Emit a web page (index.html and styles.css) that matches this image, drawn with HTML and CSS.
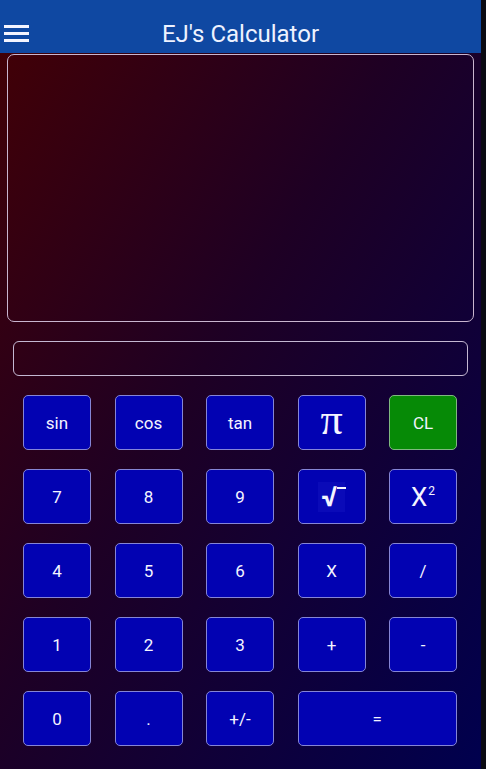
FILE: index.html
```html
<!DOCTYPE html>
<html>
<head>
<meta charset="utf-8">
<link rel="stylesheet" href="styles.css">
</head>
<body>
<div class="app">
  <header class="topbar">
    <div class="menu"><span></span><span></span><span></span></div>
    <h1 class="title">EJ's Calculator</h1>
  </header>
  <div class="display"></div>
  <div class="entry"></div>
  <div class="keypad">
    <button class="key">sin</button>
    <button class="key">cos</button>
    <button class="key">tan</button>
    <button class="key key-pi">π</button>
    <button class="key key-clear">CL</button>

    <button class="key">7</button>
    <button class="key">8</button>
    <button class="key">9</button>
    <button class="key key-sqrt"><span class="root">√<span class="bar"></span></span></button>
    <button class="key key-sq">X<sup>2</sup></button>

    <button class="key">4</button>
    <button class="key">5</button>
    <button class="key">6</button>
    <button class="key">X</button>
    <button class="key">/</button>

    <button class="key">1</button>
    <button class="key">2</button>
    <button class="key">3</button>
    <button class="key">+</button>
    <button class="key">-</button>

    <button class="key">0</button>
    <button class="key">.</button>
    <button class="key">+/-</button>
    <button class="key key-eq">=</button>
  </div>
</div>
</body>
</html>
```
FILE: styles.css
```css
html, body {
  margin: 0;
  padding: 0;
  background: #0a0a12;
}
body {
  width: 486px;
  height: 769px;
  overflow: hidden;
  font-family: Roboto, "Liberation Sans", sans-serif;
}
.app {
  width: 481px;
  height: 769px;
  background: linear-gradient(to bottom right, #440004 0%, #1e0024 45%, #00004e 100%);
  display: flex;
  flex-direction: column;
}
.topbar {
  height: 53px;
  background: #0f48a2;
  display: flex;
  align-items: flex-end;
  position: relative;
  flex-shrink: 0;
}
.menu {
  display: flex;
  flex-direction: column;
  gap: 4px;
  margin: 0 0 11px 4px;
}
.menu span {
  display: block;
  width: 25px;
  height: 3px;
  background: #f4f4ff;
}
.title {
  position: absolute;
  left: 0;
  right: 0;
  bottom: 5px;
  margin: 0;
  text-align: center;
  font-weight: 400;
  font-size: 24px;
  line-height: 28px;
  color: #eef2ff;
}
.display {
  margin: 1px 7px 0 7px;
  height: 266px;
  border: 1px solid #c9b5cf;
  border-radius: 7px;
}
.entry {
  margin: 19px 13px 0 13px;
  height: 33px;
  border: 1px solid #c4b8d2;
  border-radius: 6px;
}
.keypad {
  margin: 19px 0 0 23px;
  display: grid;
  grid-template-columns: repeat(5, 68px);
  grid-auto-rows: 55px;
  column-gap: 23.5px;
  row-gap: 19px;
}
.key {
  margin: 0;
  padding: 0;
  background: #0202b2;
  border: 1px solid #8585d6;
  border-radius: 5px;
  color: #f4f4ff;
  font-family: Roboto, "Liberation Sans", sans-serif;
  font-size: 17px;
  display: flex;
  align-items: center;
  justify-content: center;
}
.key-clear {
  background: #068a06;
  border-color: #80b880;
}
.key-pi {
  font-family: "Liberation Serif", serif;
  font-size: 44px;
  font-weight: 400;
  line-height: 1;
  padding-bottom: 6px;
}
.key-eq {
  grid-column: span 2;
}
.key-sqrt .root {
  position: relative;
  font-size: 28px;
  font-weight: 700;
  line-height: 30px;
  padding: 0 8px 0 3px;
  background: #0a0ab8;
}
.key-sqrt .bar {
  position: absolute;
  top: 5px;
  left: 19px;
  width: 9px;
  height: 2px;
  background: #f4f4ff;
}
.key-sq {
  font-size: 26px;
}
.key-sq sup {
  font-size: 12px;
  margin-left: 1px;
  position: relative;
  top: -6px;
}
```
